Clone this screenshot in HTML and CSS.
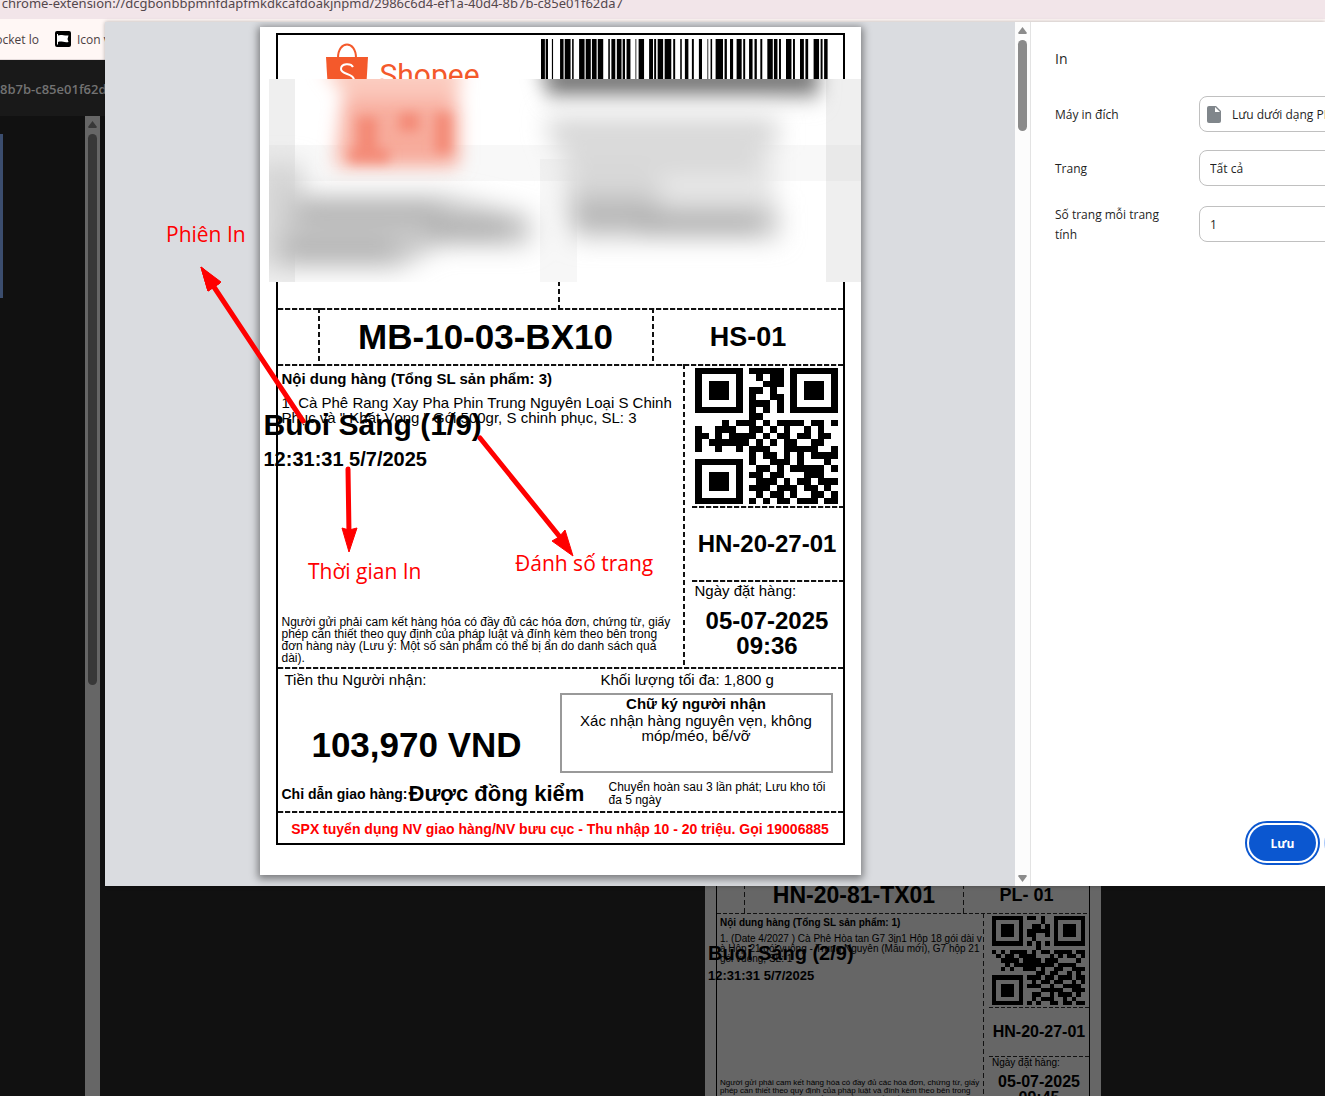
FILE: index.html
```html
<!DOCTYPE html>
<html lang="vi">
<head>
<meta charset="utf-8">
<meta name="viewport" content="width=device-width, initial-scale=1">
<title>In</title>
<link rel="stylesheet" href="styles.css">
</head>
<body>
<div class="browser">
  <div class="address"><span class="address-text">chrome-extension://dcgbonbbpmnfdapfmkdkcafdoakjnpmd/2986c6d4-ef1a-40d4-8b7b-c85e01f62da7</span></div>
  <nav class="bookmarks">
    <a class="bookmark bookmark-cut" href="#">ocket lo</a>
    <a class="bookmark" href="#">
      <svg width="16" height="16" viewBox="0 0 16 16" aria-hidden="true"><rect width="16" height="16" rx="2" fill="#000"/><path d="M2.500 3v10.500" stroke="#fff"/><path d="M3 4.500c3-1.500 6 .5 10.500 0l-1 3.500 1 3c-4.500 1-7-1.500-10.500 0z" fill="#fff"/></svg>
      <span>Icon v</span>
    </a>
  </nav>
  <header class="viewer-title">8b7b-c85e01f62da7</header>
  <div class="viewer">
    <aside class="thumbs"><div class="thumb-active"></div></aside>
    <div class="scrollbar scrollbar-dark"><span class="arrow-up"></span><span class="scroll-thumb"></span></div>
    <main class="pages">
      <article class="sheet sheet-small">
        <div class="frame">
          <div class="route">
            <div class="route-side"></div>
            <div class="route-main">HN-20-81-TX01</div>
            <div class="route-end">PL- 01</div>
          </div>
          <div class="middle">
            <div class="goods">
              <div>
                <h2>Nội dung hàng (Tổng SL sản phẩm: 1)</h2>
                <p class="item">1. (Date 4/2027 ) Cà Phê Hòa tan G7 3in1 Hộp 18 gói dài v<br>à Hộp 21 gói vuông - Trung Nguyên (Mẫu mới), G7 hộp 21<br>gói vuông, SL: 1</p>
              </div>
              <p class="note">Người gửi phải cam kết hàng hóa có đầy đủ các hóa đơn, chứng từ, giấy<br>phép cần thiết theo quy định của pháp luật và đính kèm theo bên trong<br>đơn hàng này (Lưu ý: Một số sản phẩm có thể bị ẩn do danh sách quá<br>dài).</p>
            </div>
            <div class="codes">
              <svg class="qr" data-qr="b" viewBox="0 0 21 21" preserveAspectRatio="none" shape-rendering="crispEdges"></svg>
              <div class="zone">HN-20-27-01</div>
              <div class="ordered">
                <p>Ngày đặt hàng:</p>
                <strong>05-07-2025<br>09:45</strong>
              </div>
            </div>
          </div>
        </div>
        <div class="stamp"><strong>Buoi Sáng (2/9)</strong><b>12:31:31 5/7/2025</b></div>
      </article>
    </main>
  </div>
</div>

<section class="dialog" role="dialog" aria-label="In">
  <div class="preview">
    <article class="sheet">
      <div class="frame">
        <div class="head">
          <div class="brand">
            <svg width="42" height="48" viewBox="0 0 42 48" aria-hidden="true"><path d="M12 15C12-3 30-3 30 15" fill="none" stroke="#f4592b" stroke-width="2"/><path d="M0 14h42l-2 34H2z" fill="#f4592b"/><path d="M27 24c-2-4-12-4-12 2 0 6 13 4 13 11" fill="none" stroke="#fff" stroke-width="2"/></svg>
            <span>Shopee</span>
          </div>
          <svg class="barcode" viewBox="722 0 738 10" preserveAspectRatio="none"></svg>
          <div class="head-split"></div>
        </div>
        <div class="route">
          <div class="route-side"></div>
          <div class="route-main">MB-10-03-BX10</div>
          <div class="route-end">HS-01</div>
        </div>
        <div class="middle">
          <div class="goods">
            <div>
              <h2>Nội dung hàng (Tổng SL sản phẩm: 3)</h2>
              <p class="item">1. Cà Phê Rang Xay Pha Phin Trung Nguyên Loại S Chinh<br>Phục và " Khát Vọng " Gói 500gr, S chinh phục, SL: 3</p>
            </div>
            <p class="note">Người gửi phải cam kết hàng hóa có đầy đủ các hóa đơn, chứng từ, giấy<br>phép cần thiết theo quy định của pháp luật và đính kèm theo bên trong<br>đơn hàng này (Lưu ý: Một số sản phẩm có thể bị ẩn do danh sách quá<br>dài).</p>
          </div>
          <div class="codes">
            <svg class="qr" data-qr="a" viewBox="0 0 21 21" preserveAspectRatio="none" shape-rendering="crispEdges"></svg>
            <div class="zone">HN-20-27-01</div>
            <div class="ordered">
              <p>Ngày đặt hàng:</p>
              <strong>05-07-2025<br>09:36</strong>
            </div>
          </div>
        </div>
        <div class="payment">
          <div class="cod">
            <p>Tiền thu Người nhận:</p>
            <strong>103,970 VND</strong>
          </div>
          <div class="receipt">
            <p>Khối lượng tối đa: 1,800 g</p>
            <div class="signature"><b>Chữ ký người nhận</b><span>Xác nhận hàng nguyên vẹn, không<br>móp/méo, bể/vỡ</span></div>
          </div>
        </div>
        <div class="delivery">
          <b>Chỉ dẫn giao hàng:</b>
          <strong>Được đồng kiểm</strong>
          <p>Chuyển hoàn sau 3 lần phát; Lưu kho tối<br>đa 5 ngày</p>
        </div>
        <div class="hiring">SPX tuyển dụng NV giao hàng/NV bưu cục - Thu nhập 10 - 20 triệu. Gọi 19006885</div>
      </div>
      <svg class="redacted" viewBox="0 0 592 203" aria-hidden="true">
        <defs>
          <filter id="soft" x="-30%" y="-30%" width="160%" height="160%"><feGaussianBlur stdDeviation="12"/></filter>
          <filter id="mid" x="-30%" y="-30%" width="160%" height="160%"><feGaussianBlur stdDeviation="9"/></filter>
          <filter id="spot" x="-50%" y="-50%" width="200%" height="200%"><feGaussianBlur stdDeviation="6"/></filter>
          <linearGradient id="bars" x2="0" y2="1"><stop offset="0" stop-color="#999"/><stop offset=".6" stop-color="#b5b5b5"/><stop offset="1" stop-color="#ddd" stop-opacity="0"/></linearGradient>
        </defs>
        <rect width="592" height="203" fill="#fff"/>
        <path d="M0 0h26v203H0zM557 0h35v203h-35z" fill="#efefef"/>
        <path d="M271 80h37v123h-37z" fill="#f7f7f7"/>
        <path d="M0 66h592v36H0z" fill="#aaa" opacity=".08"/>
        <g filter="url(#mid)">
          <path d="M52-14h140l-4 46h-98L72 12z" fill="#fbcabe"/>
          <path d="M74 18h112v70H66z" fill="#f9b5a7"/>
          <path d="M82 30h108v56H82z" fill="#f7ab9b"/>
          <path d="M268-14h284v44H280z" fill="url(#bars)"/>
          <path d="M282-12h264v26H282z" fill="#777"/>
        </g>
        <g filter="url(#spot)">
          <path d="M88 38h20v44H88zM130 34h20v18h-20zM166 34h16v40h-16zM80 70h40v14H80z" fill="#f27c66" opacity=".7"/>
        </g>
        <g filter="url(#soft)">
          <path d="M275 36h230v90H305z" fill="#e6e6e6"/>
          <path d="M280 46h230v14H280zM300 74h190v14H300zM300 100h90v14h-90z" fill="#ccc"/>
          <path d="M-10 85h44v104H-10z" fill="#d4d4d4"/>
          <path d="M22 116h150l90 20v30h-90l-44 24H10z" fill="#c8c8c8"/>
          <path d="M30 126h140v14H30zM15 162h110v14H15zM160 142h80v18h-80z" fill="#aaa"/>
          <path d="M296 116h90l14 10h110v34H305z" fill="#ccc"/>
          <path d="M306 128h80v16h-80zM370 136h120v16H370z" fill="#aaa"/>
        </g>
      </svg>
      <div class="stamp"><strong>Buoi Sáng (1/9)</strong><b>12:31:31 5/7/2025</b></div>
    </article>
    <svg class="arrows" width="560" height="420" viewBox="100 200 560 420" aria-hidden="true">
      <g stroke="#f00" stroke-width="5" stroke-linecap="round"><path d="M303 421L212 284M348 469l1 64M480 438l84 104"/></g>
      <path d="M201 267l19 16-12 8zM201 267l19 16-12 8zM201 267l7 24 13-9zM349 552l-7-24 7 2 8-2zM573 556l-21-15 7-4 6-7z" fill="#f00" stroke="#f00"/>
    </svg>
    <span class="callout callout-session">Phiên In</span>
    <span class="callout callout-time">Thời gian In</span>
    <span class="callout callout-page">Đánh số trang</span>
  </div>
  <div class="scrollbar"><span class="arrow-up"></span><span class="scroll-thumb"></span><span class="arrow-down"></span></div>
  <form class="settings">
    <h1>In</h1>
    <div class="field">
      <label for="printer">Máy in đích</label>
      <div class="control">
        <svg width="14" height="17" viewBox="0 0 14 17" aria-hidden="true"><path d="M2 0h7l5 5v10q0 2-2 2H2q-2 0-2-2V2q0-2 2-2z" fill="#80868b"/><path d="M8 1v5h5z" fill="#fff"/></svg>
        <select id="printer" class="with-icon"><option>Lưu dưới dạng PDF</option></select>
      </div>
    </div>
    <div class="field">
      <label for="range">Trang</label>
      <div class="control"><select id="range"><option>Tất cả</option></select></div>
    </div>
    <div class="field field-tall">
      <label for="per-sheet">Số trang mỗi trang tính</label>
      <div class="control"><select id="per-sheet"><option>1</option></select></div>
    </div>
    <div class="actions">
      <button type="button" class="save">Lưu</button>
      <button type="button" class="cancel" aria-label="Hủy"></button>
    </div>
  </form>
</section>
<script src="codes.js"></script>
</body>
</html>
```
FILE: styles.css
```css
* { box-sizing: border-box; }
body {
  margin: 0;
  height: 100vh;
  overflow: hidden;
  position: relative;
  font-family: "Open Sans", "Noto Sans", sans-serif;
  font-size: 12px;
  color: #1f1f1f;
}
h1, h2, p { margin: 0; font-size: inherit; font-weight: inherit; }

/* Browser window behind the dialog */
.browser { height: 100vh; display: flex; flex-direction: column; background: #111; }
.address {
  flex: none; height: 19px; width: 100%;
  background: #f2e5e9; overflow: hidden;
  display: flex; align-items: flex-end;
}
.address-text {
  width: 623px; display: flex; justify-content: flex-end;
  font: 13px/32px "Noto Sans", sans-serif; color: #54474c; white-space: nowrap;
}
.bookmarks {
  flex: none; height: 41px; background: #fff7f5; border-bottom: 1px solid #e5dcdc;
  display: flex; align-items: center; gap: 16px;
}
.bookmark { display: flex; align-items: center; gap: 6px; color: #4b4043; text-decoration: none; white-space: nowrap; }
.bookmark-cut { width: 39px; justify-content: flex-end; }
.viewer-title {
  flex: none; height: 56px; background: #191919; color: #727272;
  font-size: 13px; font-weight: 600; line-height: 58px;
}
.viewer { flex: 1; min-height: 0; display: flex; }
.thumbs { width: 85px; padding-top: 18px; }
.thumb-active { width: 3px; height: 164px; background: #3b4d6e; }
.pages { flex: 1; min-width: 0; padding: 753px 0 0 605px; overflow: hidden; }

/* Scrollbars */
.scrollbar {
  flex: none; width: 15px; background: #fcfcfc;
  display: flex; flex-direction: column; align-items: center;
  padding: 5px 0 4px; color: #8b8b8b;
}
.arrow-up, .arrow-down { width: 9px; height: 7px; background: currentColor; clip-path: polygon(50% 0, 100% 85%, 90% 100%, 10% 100%, 0 85%); }
.arrow-down { margin-top: auto; transform: rotate(180deg); }
.scroll-thumb { width: 9px; height: 91px; margin-top: 6px; border-radius: 5px; background: currentColor; }
.scrollbar-dark { background: #666; color: #383838; }
.scrollbar-dark .scroll-thumb { height: 551px; }

/* Print dialog */
.dialog {
  position: absolute; top: 22px; left: 105px; right: 0; height: 864px;
  display: flex; background: #fff; overflow: hidden;
  box-shadow: 0 0 4px rgba(0, 0, 0, .3);
}
.preview {
  flex: 1; min-width: 0; position: relative; background: #dadce0; padding-top: 5px;
  display: flex; justify-content: center; align-items: flex-start;
}
.settings {
  flex: none; width: 295px; border-left: 1px solid #e3e3e3; padding: 27px 0 25px 24px;
  display: flex; flex-direction: column;
}
.settings h1 { font-size: 14px; line-height: 20px; margin-bottom: 27px; }
.field { display: grid; grid-template-columns: 144px 180px; align-items: center; height: 36px; margin-bottom: 18px; line-height: 20px; }
.field label { padding: 2px 32px 0 0; }
.field-tall { height: 40px; margin-top: -2px; padding-top: 1px; }
.control { position: relative; display: flex; align-items: center; }
.control svg { position: absolute; left: 8px; }
select {
  appearance: none; width: 100%; height: 36px; margin: 0; padding: 0 10px;
  border: 1px solid #c0c0c0; border-radius: 8px; background: transparent;
  font: 12px "Open Sans", sans-serif; color: #1f1f1f;
}
select.with-icon { padding-left: 32px; }
.actions { margin: auto 0 0 194px; display: flex; gap: 8px; }
button { flex: none; width: 67px; height: 36px; border-radius: 18px; font: 700 12px "Open Sans", sans-serif; }
.save { border: 0; background: #0b57d0; color: #fff; outline: 2px solid #0b57d0; outline-offset: 2px; }
.cancel { border: 1px solid #a8c7fa; background: #fff; }

/* Shipping label */
.sheet {
  --line-x: repeating-linear-gradient(90deg, #111 0 5px, #ccc 5px 6px, transparent 6px 7px);
  --line-y: repeating-linear-gradient(#111 0 5px, transparent 5px 8px);
  flex: none; width: 601px; padding: 6px 16px 30px; position: relative;
  background: #fff; color: #000; box-shadow: 0 2px 8px 2px rgba(0, 0, 0, .45);
  font-family: "Liberation Sans", Arial, sans-serif; font-size: 15px; line-height: 15px;
  white-space: nowrap;
}
.frame { border: 2px solid #000; }
.head { height: 273px; display: grid; grid-template: 246px 1fr / 263px 1fr; }
.brand { display: flex; gap: 12px; padding: 8px 0 0 48px; color: #f4592b; font: 30px/64px Roboto, sans-serif; }
.barcode { width: 287px; height: 100px; margin-top: 4px; }
.head-split { grid-column: 1 / 3; margin-left: 280px; background: var(--line-y) 0 0 / 2px 100% no-repeat; }
.route {
  height: 56px; display: grid; grid-template-columns: 40px 336px 1fr; align-items: stretch;
  background: var(--line-x) 0 0 / 100% 2px no-repeat; font-weight: bold; text-align: center; line-height: 58px;
}
.route-main { font-size: 35px; background: var(--line-y) 0 0 / 2px 100% no-repeat, var(--line-y) 100% 0 / 2px 100% no-repeat; }
.route-end { font-size: 27px; }
.middle {
  height: 303px; display: grid; grid-template-columns: 405px 1fr;
  background: var(--line-x) 0 0 / 100% 2px no-repeat;
}
.goods { display: flex; flex-direction: column; justify-content: space-between; padding: 7px 0 3px 4px; }
.goods h2 { font-weight: bold; margin-bottom: 9px; }
.note { font-size: 12px; line-height: 12px; }
.codes { padding: 4px 0 0 9px; background: var(--line-y) 0 0 / 2px 100% no-repeat; }
.qr { display: block; width: 143px; height: 136px; margin: 0 0 2px 3px; }
.zone {
  height: 74px; line-height: 76px; font-size: 24px; font-weight: bold; text-align: center;
  background: var(--line-x) 0 0 / 100% 2px no-repeat;
}
.ordered { padding-top: 3px; background: var(--line-x) 0 0 / 100% 2px no-repeat; }
.ordered p { padding-left: 3px; margin-bottom: 10px; }
.ordered strong { display: block; text-align: center; font-size: 24px; line-height: 25px; }
.payment {
  height: 110px; display: grid; grid-template-columns: 282px 273px; padding-top: 5px;
  background: var(--line-x) 0 0 / 100% 2px no-repeat;
}
.cod p { padding-left: 7px; }
.cod strong { display: block; padding-right: 4px; text-align: center; font-size: 35px; line-height: 116px; }
.receipt p { padding-left: 41px; margin-bottom: 6px; }
.signature { height: 80px; border: 2px solid #999; text-align: center; }
.signature b { display: block; line-height: 17px; margin-bottom: 1px; }
.delivery { height: 34px; display: flex; align-items: center; padding-left: 4px; }
.delivery b { width: 127px; font-size: 14px; }
.delivery strong { width: 200px; font-size: 22px; line-height: 34px; }
.delivery p { font-size: 12px; line-height: 13px; }
.hiring {
  height: 32px; line-height: 36px; text-align: center; color: #f00; font-weight: bold; font-size: 14px;
  background: var(--line-x) 0 0 / 100% 2px no-repeat;
}
.redacted { position: absolute; left: 9px; top: 52px; width: 592px; height: 203px; overflow: hidden; }
.stamp { position: absolute; left: 4px; top: 380px; }
.stamp strong { display: block; font-size: 30px; line-height: 36px; margin-bottom: 6px; }
.stamp b { display: block; font-size: 20px; line-height: 20px; }

/* Red notes over the preview */
.arrows { position: absolute; left: -5px; top: 178px; }
.callout { position: absolute; color: #f00; font: 21px/28px "Open Sans", sans-serif; }
.callout-session { left: 61px; top: 198px; }
.callout-time { left: 203px; top: 535px; }
.callout-page { left: 410px; top: 527px; }

/* Dimmed label page in the viewer */
.sheet-small {
  width: 396px; padding: 6px 11px; background: #666; box-shadow: none; font-size: 10px; line-height: 10px;
  --line-x: repeating-linear-gradient(90deg, #111 0 4px, transparent 4px 6px);
}
.sheet-small .frame { border-width: 1px; }
.sheet-small .route, .sheet-small .middle, .sheet-small .zone, .sheet-small .ordered { background-size: 100% 1px; }
.sheet-small .route { height: 37px; grid-template-columns: 27px 220px 1fr; line-height: 39px; }
.sheet-small .route-main { font-size: 23px; background-size: 1px 100%; }
.sheet-small .route-end { font-size: 18px; }
.sheet-small .middle { height: 199px; grid-template-columns: 266px 1fr; }
.sheet-small .goods { padding: 5px 0 1px 3px; }
.sheet-small .goods h2 { margin-bottom: 6px; }
.sheet-small .note { font-size: 8px; line-height: 8px; }
.sheet-small .codes { padding: 3px 0 0 6px; background-size: 1px 100%; }
.sheet-small .qr { width: 93px; height: 89px; margin-bottom: 2px; }
.sheet-small .zone { height: 49px; line-height: 49px; font-size: 16px; }
.sheet-small .ordered { padding-top: 2px; }
.sheet-small .ordered p { margin-bottom: 6px; }
.sheet-small .ordered strong { font-size: 16px; line-height: 16px; }
.sheet-small .stamp { left: 3px; top: 72px; }
.sheet-small .stamp strong { font-size: 20px; line-height: 24px; margin-bottom: 4px; }
.sheet-small .stamp b { font-size: 13px; line-height: 13px; }
```
FILE: codes.js
```js
const qrRows = {
  a: [
    "111111101111101111111",
    "100000100101101000001",
    "101110100011101011101",
    "101110101101001011101",
    "101110101001101011101",
    "100000101110101000001",
    "111111101010101111111",
    "000000001100000000000",
    "000010111010111101101",
    "100111001101010010100",
    "110101111010110110110",
    "101111110101011001100",
    "100100101110011111001",
    "000000001011010101111",
    "111111101001110100010",
    "100000100110101111101",
    "101110101101100011100",
    "101110100111010110111",
    "101110101110111011010",
    "100000100101101001101",
    "111111101010110111011"
  ],
  b: [
    "111111101101001111111",
    "100000100001001000001",
    "101110100110101011101",
    "101110101111101011101",
    "101110101100101011101",
    "100000100100001000001",
    "111111101010101111111",
    "000000000010000000000",
    "101011110101101111011",
    "010110111100010101101",
    "001111011110111000010",
    "000101111111110111100",
    "001010011101001100111",
    "000000000011011001010",
    "111111101110110111011",
    "100000100101101100101",
    "101110101110010011110",
    "101110100001111100111",
    "101110100110010111010",
    "100000100101110010100",
    "111111101010011011011"
  ]
};
document.querySelectorAll(".qr").forEach(svg => {
  let d = "";
  qrRows[svg.dataset.qr].forEach((row, y) => [...row].forEach((cell, x) => {
    if (cell === "1") d += `M${x} ${y}h1v1h-1z`;
  }));
  svg.innerHTML = `<path d="${d}"/>`;
});

const bars = [722,732,734,740,750,753,771,780,783,798,802,806,820,834,837,850,853,865,868,882,895,899,903,913,917,929,932,938,942,952,965,967,973,987,1000,1010,1013,1018,1022,1036,1040,1057,1062,1067,1080,1084,1092,1101,1110,1115,1128,1136,1150,1152,1158,1162,1171,1190,1194,1200,1208,1216,1225,1238,1242,1247,1257,1266,1271,1277,1286,1291,1304,1318,1321,1330,1334,1339,1352,1366,1370,1375,1388,1398,1402,1409,1423,1437,1441,1446,1450,1459];
let path = "";
for (let i = 0; i < bars.length; i += 2) path += `M${bars[i]} 0H${bars[i + 1]}V10H${bars[i]}z`;
document.querySelector(".barcode").innerHTML = `<path d="${path}"/>`;
```
